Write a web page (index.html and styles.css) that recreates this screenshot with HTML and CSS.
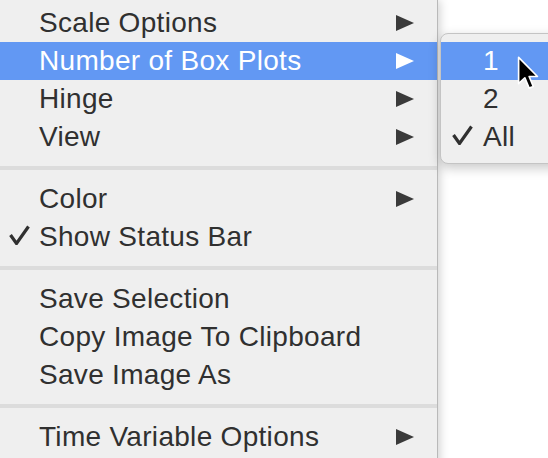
FILE: index.html
```html
<!DOCTYPE html>
<html>
<head>
<meta charset="utf-8">
<link rel="stylesheet" href="styles.css">
</head>
<body>
<div class="stage">
  <div class="menu">
    <div class="item"><span class="label">Scale Options</span><span class="arrow"></span></div>
    <div class="item active"><span class="label">Number of Box Plots</span><span class="arrow"></span></div>
    <div class="item"><span class="label">Hinge</span><span class="arrow"></span></div>
    <div class="item"><span class="label">View</span><span class="arrow"></span></div>
    <div class="sep"></div>
    <div class="item"><span class="label">Color</span><span class="arrow"></span></div>
    <div class="item"><span class="check"><svg width="21" height="20" viewBox="0 0 21 20"><path d="M1.5 10 L7.5 18.5 L19.5 1.5" fill="none" stroke="#303030" stroke-width="3.2" stroke-linejoin="miter"/></svg></span><span class="label">Show Status Bar</span></div>
    <div class="sep"></div>
    <div class="item"><span class="label">Save Selection</span></div>
    <div class="item"><span class="label">Copy Image To Clipboard</span></div>
    <div class="item"><span class="label">Save Image As</span></div>
    <div class="sep"></div>
    <div class="item"><span class="label">Time Variable Options</span><span class="arrow"></span></div>
  </div>
  <div class="submenu">
    <div class="sitem active"><span class="label">1</span></div>
    <div class="sitem"><span class="label">2</span></div>
    <div class="sitem"><span class="scheck"><svg width="21" height="20" viewBox="0 0 21 20"><path d="M1.5 10 L7.5 18.5 L19.5 1.5" fill="none" stroke="#303030" stroke-width="3.2"/></svg></span><span class="label">All</span></div>
  </div>
  <svg class="cursor" width="24" height="36" viewBox="0 0 17 26">
    <path d="M1 1 L1 20 L5.5 15.8 L8.6 23.2 L11.6 22 L8.6 14.8 L14.6 14.8 Z" fill="#000" stroke="#fff" stroke-width="1.2" stroke-linejoin="round"/>
  </svg>
</div>
</body>
</html>
```

FILE: styles.css
```css
html, body {
  margin: 0;
  padding: 0;
  background: #ffffff;
}
.stage {
  position: relative;
  width: 548px;
  height: 458px;
  overflow: hidden;
  font-family: "Liberation Sans", Arial, sans-serif;
  font-size: 28px;
  letter-spacing: 0.3px;
  color: #303030;
}
.menu {
  width: 438px;
  height: 470px;
  padding-top: 4px;
  box-sizing: border-box;
  background: #efefef;
  border-right: 1px solid #b9b9b9;
  border-bottom-right-radius: 8px;
  box-shadow: 2px 0 10px rgba(0,0,0,0.18);
  display: flex;
  flex-direction: column;
}
.item {
  height: 38px;
  line-height: 38px;
  display: flex;
  align-items: center;
  padding-left: 39px;
  padding-right: 23px;
  position: relative;
}
.item .label {
  flex: 1;
}
.item.active {
  background: #6298f3;
  color: #ffffff;
}
.arrow {
  width: 0;
  height: 0;
  border-top: 8.5px solid transparent;
  border-bottom: 8.5px solid transparent;
  border-left: 18px solid #3a3a3a;
}
.item.active .arrow {
  border-left-color: #ffffff;
}
.check {
  position: absolute;
  left: 9px;
  top: 7px;
}
.check svg, .scheck svg {
  display: block;
}
.sep {
  height: 4px;
  margin: 10px 0 10px;
  background: #dcdcdc;
}
.submenu {
  position: absolute;
  left: 440px;
  top: 33px;
  width: 130px;
  height: 131px;
  box-sizing: border-box;
  padding-top: 8px;
  background: #efefef;
  border: 1px solid #c4c4c4;
  border-radius: 8px;
  box-shadow: 0 4px 12px rgba(0,0,0,0.22);
  display: flex;
  flex-direction: column;
}
.sitem {
  height: 38px;
  line-height: 38px;
  padding-left: 42px;
  position: relative;
}
.sitem.active {
  background: #6298f3;
  color: #ffffff;
}
.scheck {
  position: absolute;
  left: 11px;
  top: 7px;
}
.cursor {
  position: absolute;
  left: 517px;
  top: 56px;
}
```
